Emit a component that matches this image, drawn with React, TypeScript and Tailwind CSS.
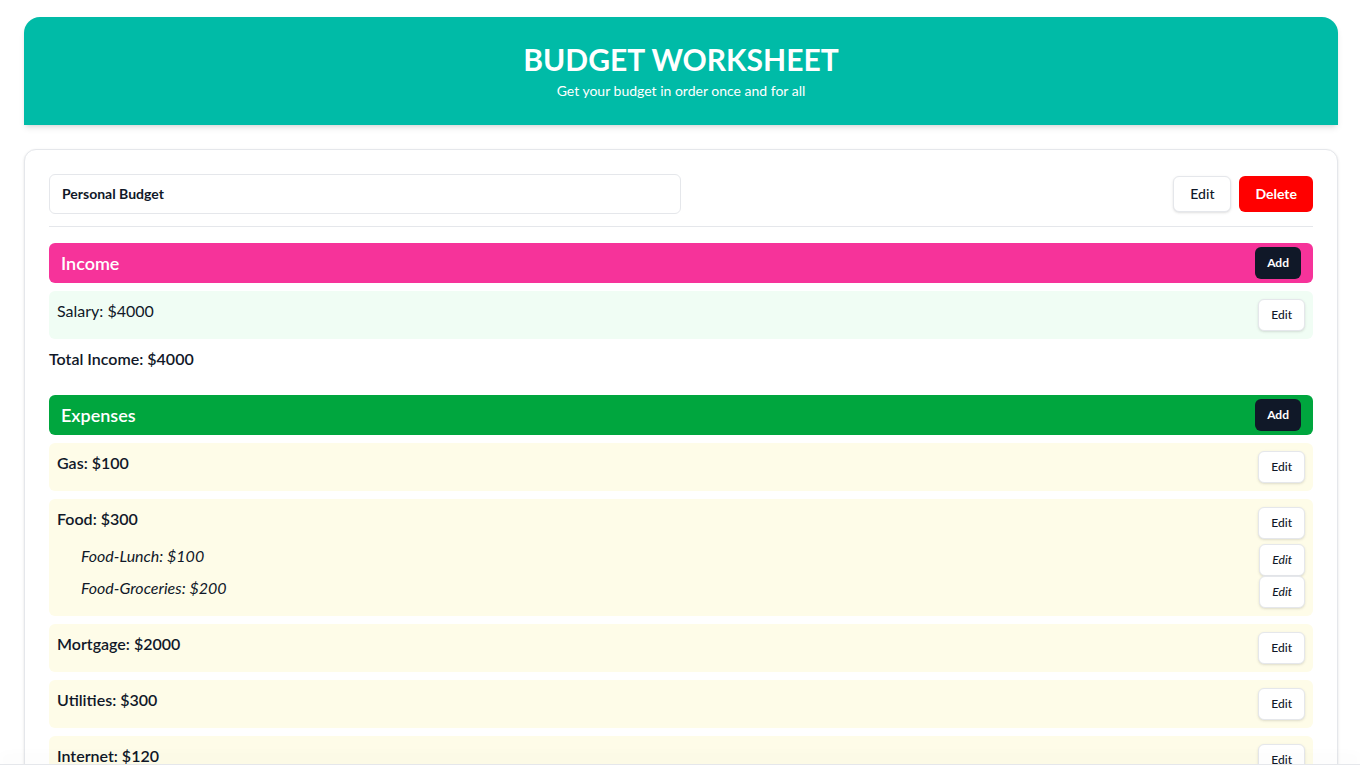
import React from 'react';

type Item = { name: string; amount: number; subs?: { name: string; amount: number }[] };

const expenses: Item[] = [
  { name: 'Gas', amount: 100 },
  {
    name: 'Food',
    amount: 300,
    subs: [
      { name: 'Food-Lunch', amount: 100 },
      { name: 'Food-Groceries', amount: 200 },
    ],
  },
  { name: 'Mortgage', amount: 2000 },
  { name: 'Utilities', amount: 300 },
  { name: 'Internet', amount: 120 },
];

const SmallEdit = () => (
  <button className="rounded-md border border-gray-200 bg-white px-3 py-[7px] text-xs leading-4 font-medium text-gray-900 shadow-sm">
    Edit
  </button>
);

const SectionHeader = ({ title, color }: { title: string; color: string }) => (
  <div className={`flex items-center justify-between rounded-md px-3 py-1 ${color}`}>
    <h2 className="text-lg font-semibold text-white">{title}</h2>
    <button className="rounded-md bg-gray-900 px-3 py-2 text-xs leading-4 font-bold text-white">Add</button>
  </div>
);

const App = () => {
  return (
    <div className="min-h-screen bg-white pt-[17px] pr-[22px] pb-10 pl-6 text-gray-900" style={{ fontFamily: 'Lato, "Open Sans", sans-serif' }}>
      <header className="rounded-t-2xl bg-teal-500 py-6 text-center text-white shadow-md">
        <h1 className="mb-1 text-3xl font-bold">BUDGET WORKSHEET</h1>
        <p className="text-sm">Get your budget in order once and for all</p>
      </header>

      <div className="mt-6 rounded-xl border border-gray-200 bg-white p-6 shadow-sm">
        <div className="flex items-center justify-between border-b border-gray-200 pb-3">
          <div className="flex h-10 w-1/2 items-center rounded-md border border-gray-200 px-3 text-sm font-bold">
            Personal Budget
          </div>
          <div className="flex gap-2">
            <button className="rounded-md border border-gray-200 bg-white px-4 py-[7px] text-sm font-medium shadow-sm">Edit</button>
            <button className="rounded-md bg-[#ff0000] px-4 py-2 text-sm font-bold text-white">Delete</button>
          </div>
        </div>

        <div className="mt-4">
          <SectionHeader title="Income" color="bg-pink-500" />
          <div className="mt-2 flex items-start justify-between rounded-md bg-green-50 p-2">
            <span className="text-base leading-6">Salary: $4000</span>
            <SmallEdit />
          </div>
          <p className="mt-2 text-base leading-6 font-semibold">Total Income: $4000</p>
        </div>

        <div className="mt-6">
          <SectionHeader title="Expenses" color="bg-green-600" />
          <div className="mt-2 flex flex-col gap-2">
            {expenses.map((e) => (
              <div key={e.name} className="rounded-md bg-yellow-50 p-2">
                <div className="flex items-start justify-between">
                  <span className="text-base leading-6 font-semibold">
                    {e.name}: ${e.amount}
                  </span>
                  <SmallEdit />
                </div>
                {e.subs && (
                  <div className="mt-[5px]">
                    {e.subs.map((s) => (
                      <div key={s.name} className="flex items-start justify-between pl-6 italic">
                        <span className="text-base leading-6">
                          {s.name}: ${s.amount}
                        </span>
                        <SmallEdit />
                      </div>
                    ))}
                  </div>
                )}
              </div>
            ))}
          </div>
        </div>
      </div>

      <div className="fixed right-0 bottom-0 left-0 h-1 border-t border-gray-200 bg-white shadow-[0_-6px_14px_rgba(0,0,0,0.05)]" />
    </div>
  );
};

export default App;
